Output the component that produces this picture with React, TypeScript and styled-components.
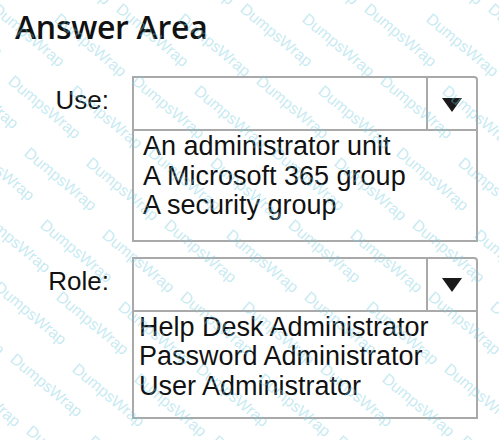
import React from "react";
import styled, { createGlobalStyle } from "styled-components";

const GlobalStyle = createGlobalStyle`
  html, body {
    margin: 0;
    padding: 0;
    background: #ffffff;
  }
`;

const Page = styled.div`
  position: relative;
  width: 499px;
  height: 440px;
  overflow: hidden;
  background: #ffffff;
  box-sizing: border-box;
  padding-top: 7px;
`;

const Heading = styled.h1`
  margin: 0;
  padding-left: 15px;
  font-family: "Open Sans", "Noto Sans", sans-serif;
  font-weight: 600;
  font-size: 32px;
  letter-spacing: -0.3px;
  line-height: 40px;
  color: #111111;
`;

const Form = styled.div`
  display: grid;
  grid-template-columns: 132px 346px;
  row-gap: 15px;
  margin-top: 29px;
`;

const Label = styled.div`
  box-sizing: border-box;
  padding-top: 9px;
  padding-right: 23px;
  text-align: right;
  font-family: "Liberation Sans", Arial, sans-serif;
  font-size: 26px;
  line-height: 30px;
  color: #111111;
`;

const Select = styled.div`
  display: flex;
  flex-direction: column;
`;

const SelectBox = styled.div`
  display: flex;
  height: 55px;
  box-sizing: border-box;
  border: 2px solid #a9a9a9;
  border-top-right-radius: 4px;
  background: #ffffff;
`;

const Value = styled.div`
  flex: 1;
`;

const ArrowCell = styled.div`
  width: 50px;
  display: flex;
  align-items: center;
  justify-content: center;
  border-left: 2px solid #a9a9a9;
  padding-top: 2px;
  box-sizing: border-box;
`;

const OptionList = styled.div<{ $inset: number; $bottom: number }>`
  box-sizing: border-box;
  border: 2px solid #a9a9a9;
  border-top: none;
  padding: 1px 0 ${(p) => p.$bottom}px ${(p) => p.$inset}px;
  font-family: "Liberation Sans", Arial, sans-serif;
  font-size: 27px;
  line-height: 29.5px;
  color: #111111;
`;

const Option = styled.div`
  white-space: nowrap;
`;

const Watermarks = styled.div`
  position: absolute;
  inset: 0;
  pointer-events: none;
  overflow: hidden;
`;

const Mark = styled.span`
  position: absolute;
  font-family: "Liberation Sans", Arial, sans-serif;
  font-size: 16px;
  color: rgba(120, 205, 225, 0.42);
  transform: rotate(40deg);
  transform-origin: left top;
  white-space: nowrap;
`;

const Arrow = () => (
  <svg width="20" height="14" viewBox="0 0 20 14">
    <polygon points="0,0 20,0 10,14" fill="#1a1a1a" />
  </svg>
);

type FieldProps = {
  label: string;
  options: string[];
  inset: number;
  bottom: number;
};

const Field = ({ label, options, inset, bottom }: FieldProps) => (
  <>
    <Label>{label}</Label>
    <Select>
      <SelectBox>
        <Value />
        <ArrowCell>
          <Arrow />
        </ArrowCell>
      </SelectBox>
      <OptionList $inset={inset} $bottom={bottom}>
        {options.map((o) => (
          <Option key={o}>{o}</Option>
        ))}
      </OptionList>
    </Select>
  </>
);

// diagonal lattice of the site stamp laid over the whole panel
const marks: { x: number; y: number }[] = [];
for (let row = -2; row < 7; row++) {
  for (let col = -3; col < 9; col++) {
    marks.push({ x: col * 62 + row * 16, y: row * 72 + (col % 2) * 10 });
  }
}

export default function App() {
  return (
    <>
      <GlobalStyle />
      <Page>
        <Heading>Answer Area</Heading>
        <Form>
          <Field
            label="Use:"
            inset={9}
            bottom={19}
            options={[
              "An administrator unit",
              "A Microsoft 365 group",
              "A security group",
            ]}
          />
          <Field
            label="Role:"
            inset={5}
            bottom={16}
            options={[
              "Help Desk Administrator",
              "Password Administrator",
              "User Administrator",
            ]}
          />
        </Form>
        <Watermarks>
          {marks.map((m, i) => (
            <Mark key={i} style={{ left: m.x, top: m.y }}>
              DumpsWrap
            </Mark>
          ))}
        </Watermarks>
      </Page>
    </>
  );
}
